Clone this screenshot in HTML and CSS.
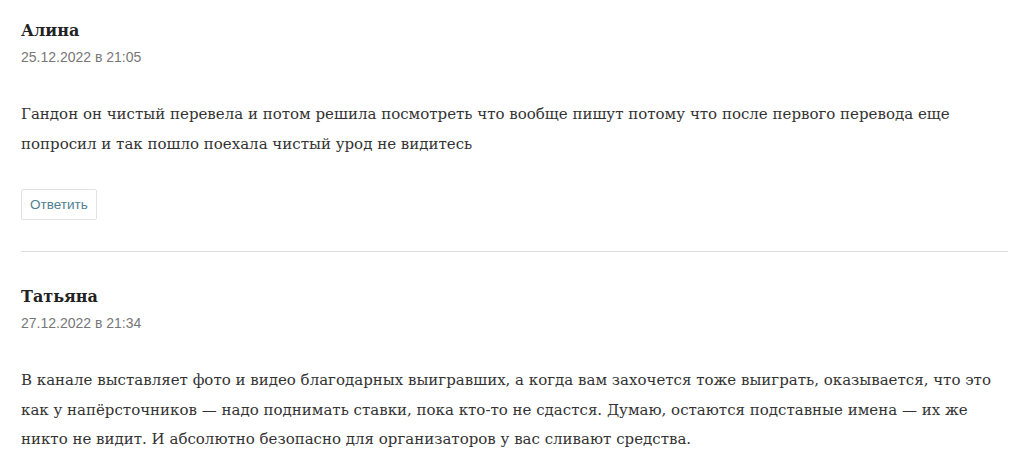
FILE: index.html
```html
<!DOCTYPE html>
<html>

<head>
    <meta name="viewport" content="width=device-width, initial-scale=1">
    <link rel="stylesheet" href="styles.css">
    <title>Комментарии</title>
</head>

<body>
    <div id="comments">
        <div class="comment">
            <div class="comment-author">Алина</div>
            <div class="comment-date">25.12.2022 в 21:05</div>
            <p class="comment-text">Гандон он чистый перевела и потом решила посмотреть что вообще пишут потому что после первого перевода еще попросил и так пошло поехала чистый урод не видитесь</p>
            <button class="reply-btn">Ответить</button>
        </div>

        <div class="comment">
            <div class="comment-author">Татьяна</div>
            <div class="comment-date">27.12.2022 в 21:34</div>
            <p class="comment-text">В канале выставляет фото и видео благодарных выигравших, а когда вам захочется тоже выиграть, оказывается, что это как у напёрсточников — надо поднимать ставки, пока кто-то не сдастся. Думаю, остаются подставные имена — их же никто не видит. И абсолютно безопасно для организаторов у вас сливают средства.</p>
        </div>
    </div>
</body>

</html>
```

FILE: styles.css
```css
body {
    margin: 0;
    background: #ffffff;
    font-family: "DejaVu Serif", serif;
    color: #333333;
}

#comments {
    padding: 19px 16px 0 21px;
}

.comment {
    border-bottom: 1px solid #dddddd;
    padding-bottom: 31px;
    margin-bottom: 33px;
}

.comment:last-child {
    border-bottom: none;
}

.comment-author {
    font-size: 16px;
    font-weight: bold;
    color: #222222;
    line-height: 24px;
}

.comment-date {
    font-family: "Liberation Sans", Arial, sans-serif;
    font-size: 14px;
    color: #777777;
    margin-top: 6px;
    line-height: 16px;
}

.comment-text {
    font-size: 15px;
    line-height: 29.5px;
    margin: 35px 0 30px;
}

.reply-btn {
    font-family: "Liberation Sans", Arial, sans-serif;
    font-size: 13.5px;
    color: #4f7f90;
    background: #ffffff;
    border: 1px solid #e2e2e2;
    border-radius: 2px;
    padding: 7px 8px;
    line-height: 15px;
    cursor: pointer;
}
```
